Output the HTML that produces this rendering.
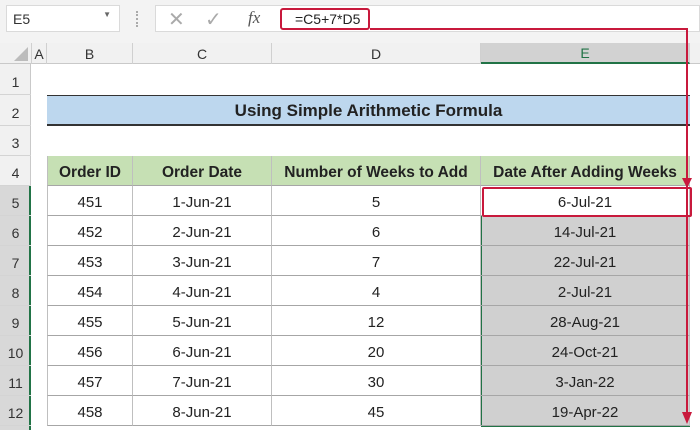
<!DOCTYPE html>
<html><head><style>
*{margin:0;padding:0;box-sizing:border-box}
body{width:700px;height:430px;overflow:hidden;background:#fff;font-family:"Liberation Sans",Calibri,sans-serif;position:relative}
.a{position:absolute}
.c{position:absolute;display:flex;align-items:center;justify-content:center;font-size:15px;color:#222;padding-top:4px}
.rn{position:absolute;left:0;width:31px;display:flex;align-items:center;justify-content:center;font-size:14px;color:#333;border-bottom:1px solid #d4d4d4;padding-top:5px}
.ch{position:absolute;top:43px;height:21px;display:flex;align-items:center;justify-content:center;font-size:14px;color:#333;border-right:1px solid #d0d0d0}
</style></head><body>
<div class="a" style="left:0;top:0;width:700px;height:43px;background:#f3f3f3"></div>
<div class="a" style="left:6px;top:5px;width:114px;height:27px;background:#fff;border:1px solid #dadada;font-size:14px;padding:5px 0 0 6px;color:#333">E5<span style="position:absolute;right:8px;top:4px;font-size:8px;color:#666">▼</span></div>
<div class="a" style="left:136px;top:11px;width:3px;height:16px;border-left:2px dotted #aaa"></div>
<div class="a" style="left:155px;top:5px;width:545px;height:27px;background:#fff;border:1px solid #dadada"></div>
<div class="a" style="left:168px;top:7px;font-size:20px;color:#aaa">✕</div>
<div class="a" style="left:205px;top:7px;font-size:20px;color:#aaa">✓</div>
<div class="a" style="left:248px;top:8px;font-size:17px;color:#555;font-style:italic;font-family:'Liberation Serif',serif">fx</div>
<div class="a" style="left:280px;top:8px;width:90px;height:22px;border:2px solid #c8193c;border-radius:3px;font-size:14px;padding:1px 0 0 13px;color:#222">=C5+7*D5</div>
<div class="a" style="left:0;top:43px;width:700px;height:21px;background:#f1f1f1;border-bottom:1px solid #c9c9c9"></div>
<svg class="a" style="left:14px;top:47px" width="14" height="14"><polygon points="14,0 14,14 0,14" fill="#bcbcbc"/></svg>
<div class="ch" style="left:31px;width:16px;border-left:1px solid #d0d0d0">A</div>
<div class="ch" style="left:47px;width:86px">B</div>
<div class="ch" style="left:133px;width:139px">C</div>
<div class="ch" style="left:272px;width:209px">D</div>
<div class="ch" style="left:481px;width:209px;background:#d2d2d2;border-bottom:2px solid #217346;color:#217346">E</div>
<div class="a" style="left:0;top:64px;width:31px;height:366px;background:#f1f1f1;border-right:1px solid #c9c9c9"></div>
<div class="a" style="left:0;top:186px;width:31px;height:244px;background:#d8d8d8;border-right:2px solid #217346"></div>
<div class="rn" style="top:64px;height:31px">1</div>
<div class="rn" style="top:95px;height:31px">2</div>
<div class="rn" style="top:126px;height:30px">3</div>
<div class="rn" style="top:156px;height:30px">4</div>
<div class="rn" style="top:186px;height:30px">5</div>
<div class="rn" style="top:216px;height:30px">6</div>
<div class="rn" style="top:246px;height:30px">7</div>
<div class="rn" style="top:276px;height:30px">8</div>
<div class="rn" style="top:306px;height:30px">9</div>
<div class="rn" style="top:336px;height:30px">10</div>
<div class="rn" style="top:366px;height:30px">11</div>
<div class="rn" style="top:396px;height:30px">12</div>
<div class="c" style="left:47px;top:95px;width:643px;height:31px;background:#bdd7ee;border-top:1px solid #333;border-bottom:2px solid #333;font-weight:bold;font-size:17px;padding-top:2px">Using Simple Arithmetic Formula</div>
<div class="a" style="left:481px;top:186px;width:209px;height:241px;background:#d0d0d0;border:1px solid #217346"></div>
<div id="t"></div>
<script>
var cols=[[47,86],[133,139],[272,209],[481,209]];
var rows=[["Order ID","Order Date","Number of Weeks to Add","Date After Adding Weeks"],
["451","1-Jun-21","5","6-Jul-21"],["452","2-Jun-21","6","14-Jul-21"],["453","3-Jun-21","7","22-Jul-21"],["454","4-Jun-21","4","2-Jul-21"],["455","5-Jun-21","12","28-Aug-21"],["456","6-Jun-21","20","24-Oct-21"],["457","7-Jun-21","30","3-Jan-22"],["458","8-Jun-21","45","19-Apr-22"]];
var h="";
rows.forEach(function(r,i){var y=156+i*30;r.forEach(function(t,j){
var st="left:"+cols[j][0]+"px;top:"+y+"px;width:"+cols[j][1]+"px;height:30px;border-bottom:1px solid #a6a6a6;border-right:1px solid #bfbfbf;";
if(j==0)st+="border-left:1px solid #bfbfbf;";
if(i==0)st+="background:#c6e0b4;font-weight:bold;font-size:15.5px;";
if(i==1&&j==3)st+="background:#fff;";
h+='<div class="c" style="'+st+'">'+t+'</div>';});});
document.getElementById("t").innerHTML=h;
</script>
<div class="a" style="left:482px;top:187px;width:210px;height:30px;border:2px solid #c8193c;border-radius:2px"></div>
<svg class="a" style="left:0;top:0" width="700" height="430">
<polyline points="370,29 687,29 687,418" fill="none" stroke="#c8193c" stroke-width="2"/>
<polygon points="682,412 692,412 687,424" fill="#c8193c"/>
<polygon points="682,178 692,178 687,188" fill="#c8193c"/>
</svg>
</body></html>
